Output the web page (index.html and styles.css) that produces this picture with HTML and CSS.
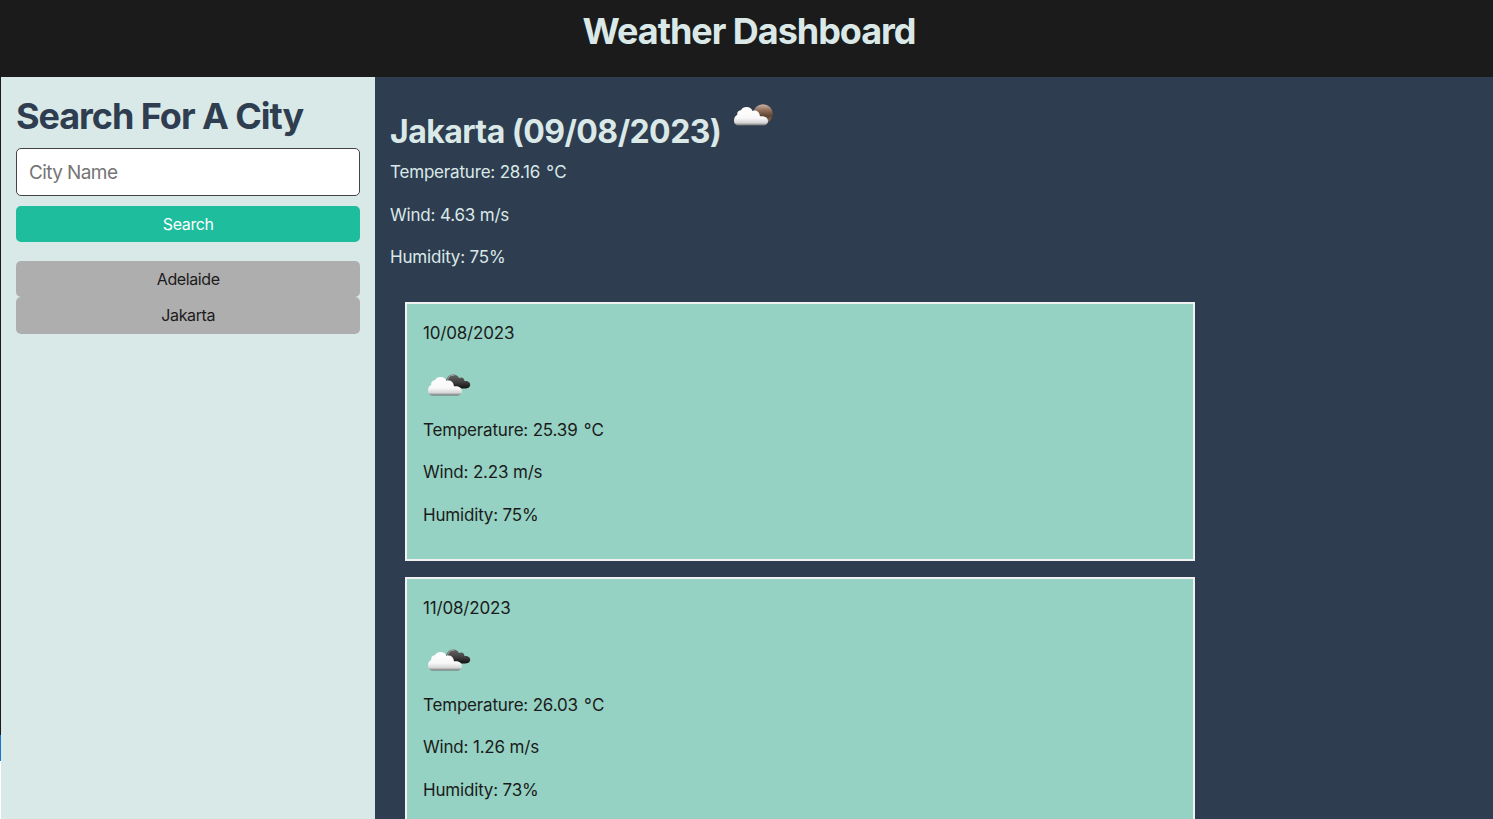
FILE: index.html
```html
<!DOCTYPE html>
<html lang="en">
<head>
<meta charset="utf-8">
<title>Weather Dashboard</title>
<link rel="stylesheet" href="styles.css">
</head>
<body>
<svg width="0" height="0" class="defs" aria-hidden="true">
  <defs>
    <linearGradient id="cloud" x1="0" y1="0" x2="0" y2="1"><stop offset="0" stop-color="#fff"/><stop offset=".6" stop-color="#f8f8f8"/><stop offset=".86" stop-color="#d4d4d4"/><stop offset="1" stop-color="#6d6d6d"/></linearGradient>
    <linearGradient id="dark" x1="0" y1="0" x2="0" y2="1"><stop offset="0" stop-color="#666"/><stop offset=".5" stop-color="#444"/><stop offset="1" stop-color="#111"/></linearGradient>
    <linearGradient id="moon" x1="0" y1="0" x2="0" y2="1"><stop offset="0" stop-color="#cdb5a6"/><stop offset=".3" stop-color="#92705c"/><stop offset=".6" stop-color="#5f4433"/><stop offset="1" stop-color="#927664"/></linearGradient>
    <path id="front" d="M5 21.5C2 21.5 0 19.500 0 16.700C0 14 1.200 11.600 3.300 10.800C2.800 7.800 4.800 6.300 7 6.200C8 3.700 10 3 12.500 3C15.500 3 17.600 4.500 18.500 7C22 5.600 25.500 7.500 26 12.300C30 11.600 34 13.500 34 17C34 19.500 32 21.500 29 21.500Z"/>
    <symbol id="broken" viewBox="0 0 43 23"><path d="M18 9C18 3 22 0 25.500 .5C28 .5 30 2 31 4C34 2.500 36.500 4.500 36.500 7C40 6.500 42.500 8.500 42.200 11C42 13.500 39.500 14.600 36.500 14.500H25Z" fill="url(#dark)"/><path d="M19.500 7C20 2.500 23 .7 26.500 1.200" fill="none" stroke="#aaa" stroke-width="1"/><use href="#front" fill="url(#cloud)"/></symbol>
    <symbol id="night" viewBox="0 0 40 23"><circle cx="29" cy="10" r="9.800" fill="url(#moon)"/><use href="#front" fill="url(#cloud)"/></symbol>
  </defs>
</svg>
<header class="header"><h1>Weather Dashboard</h1></header>
<div class="layout">
  <aside class="sidebar">
    <h2>Search For A City</h2>
    <input class="city" type="text" placeholder="City Name">
    <button class="btn search">Search</button>
    <div class="history"><button class="btn">Adelaide</button><button class="btn">Jakarta</button></div>
  </aside>
  <main class="main">
    <div class="current"><h2>Jakarta (09/08/2023)</h2><svg class="night"><use href="#night"/></svg></div>
    <p>Temperature: 28.16 <span class="unit">°C</span></p>
    <p>Wind: 4.63 m/s</p>
    <p>Humidity: 75%</p>
    <section class="forecast">
      <article class="card"><p>10/08/2023</p><svg class="icon"><use href="#broken"/></svg><p>Temperature: 25.39 <span class="unit">°C</span></p><p>Wind: 2.23 m/s</p><p>Humidity: 75%</p></article>
      <article class="card"><p>11/08/2023</p><svg class="icon"><use href="#broken"/></svg><p>Temperature: 26.03 <span class="unit">°C</span></p><p>Wind: 1.26 m/s</p><p>Humidity: 73%</p></article>
    </section>
  </main>
</div>
</body>
</html>
```
FILE: styles.css
```css
* { box-sizing: border-box; }
body { margin: 0; height: 819px; overflow: hidden; display: flex; flex-direction: column; background: #1b1b1b; color: #1b1b1b; font: 17px/25.500px Inter, sans-serif; letter-spacing: -.180px; }
.defs { position: absolute; }
h1, h2, p { margin: 0; }
.header { flex: none; height: 77px; padding: 10px 0 0 5px; text-align: center; color: #dae9e8; }
.header h1 { font-size: 36px; line-height: 43px; letter-spacing: -1.040px; }
.layout { flex: 1; min-height: 0; display: flex; border-left: 1px solid; border-image: linear-gradient(#1b1b1b 0 657px, #1b76d2 657px 683px, #fff 683px) 1; }
.sidebar { flex: none; width: 374.400px; padding: 18px 15px 0; background: #d9e9e8; }
.sidebar h2 { font-size: 36px; line-height: 43px; letter-spacing: -1.050px; color: #2e3d50; white-space: nowrap; }
.city { display: block; width: 100%; height: 48px; margin-top: 10px; padding: 0 12px; border: 1px solid #444; border-radius: 5px; background: #fff; font: 19px Inter, sans-serif; letter-spacing: -.6px; }
.city::placeholder { color: #757575; }
.btn { display: block; width: 100%; height: 36.250px; padding: 0; border: 0; border-radius: 5px; background: #aeaeae; color: #1b1b1b; font: 16px Inter, sans-serif; letter-spacing: -.4px; }
.search { margin-top: 10px; background: #1dbd9d; color: #fff; }
.history { margin-top: 18.750px; }
.main { flex: 1; padding: 27px 0 0 14.600px; background: #2e3d50; color: #dae9e8; }
.current { display: flex; height: 56px; }
.current h2 { padding-top: 8px; font-size: 32px; line-height: 39px; letter-spacing: -.550px; }
.night { width: 40px; height: 23px; margin-left: 13px; }
.main p { margin-bottom: 17px; }
.unit { letter-spacing: .4px; margin-left: 1.500px; }
.forecast { padding: 14.500px 0 0 15px; }
.card { width: 790px; height: 259px; margin-bottom: 16px; padding: 17px 16px; border: 2px solid #f1f1f1; background: #95d2c3; color: #1b1b1b; }
.icon { display: block; width: 43px; height: 23px; margin: 27.500px 0 20.500px 5px; }
```
